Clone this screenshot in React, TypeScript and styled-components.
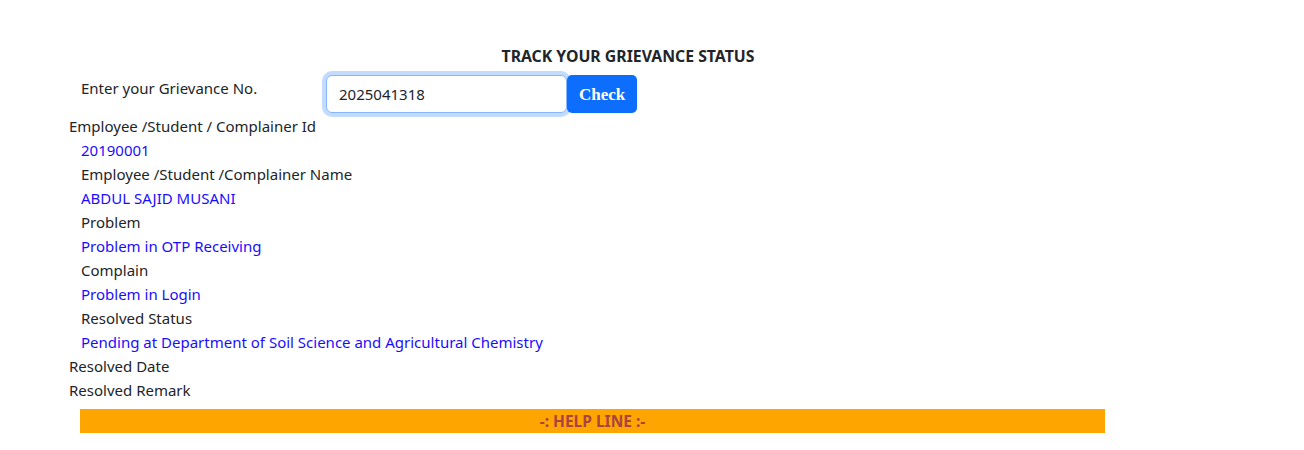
import React from 'react';
import styled, { createGlobalStyle } from 'styled-components';

const GlobalStyle = createGlobalStyle`
  body {
    margin: 0;
    background: #fff;
    color: #212529;
    font-family: "Noto Sans", "Open Sans", sans-serif;
    font-size: 15px;
    line-height: 24px;
  }
`;

const Page = styled.div`
  padding: 44px 0 0 69px;
  width: 1036px;
`;

const Title = styled.h5`
  margin: 0 0 7px;
  padding-left: 82px;
  text-align: center;
  font-size: 15.8px;
  font-weight: 700;
  line-height: 24px;
`;

const SearchRow = styled.div`
  display: flex;
  align-items: flex-start;
  padding: 0 0 1px 12px;
`;

const SearchLabel = styled.label`
  width: 245px;
  padding-top: 1px;
`;

const InputBox = styled.input`
  box-sizing: border-box;
  width: 241px;
  height: 38px;
  margin: 0;
  padding: 4px 12px;
  font: inherit;
  color: #212529;
  border: 1px solid #86b7fe;
  border-radius: 6px;
  outline: none;
  box-shadow: 0 0 0 4px rgba(13, 110, 253, 0.25);
`;

const CheckButton = styled.button`
  box-sizing: border-box;
  height: 38px;
  padding: 2px 12px 0;
  background: #0d6efd;
  color: #fff;
  border: none;
  border-radius: 5px;
  font-family: "Liberation Serif", serif;
  font-weight: 700;
  font-size: 17px;
  position: relative;
`;

const Field = styled.div<{ $indent?: boolean; $value?: boolean }>`
  padding-left: ${(p) => (p.$indent ? '12px' : '0')};
  color: ${(p) => (p.$value ? '#1a0dff' : '#212529')};
`;

const HelpLine = styled.div`
  margin: 7px 0 0 11px;
  background: #ffa500;
  color: #a94442;
  text-align: center;
  font-size: 15.5px;
  font-weight: 700;
  line-height: 24px;
`;

const rows: Array<[string, boolean, boolean]> = [
  ['20190001', true, true],
  ['Employee /Student /Complainer Name', true, false],
  ['ABDUL SAJID MUSANI', true, true],
  ['Problem', true, false],
  ['Problem in OTP Receiving', true, true],
  ['Complain', true, false],
  ['Problem in Login', true, true],
  ['Resolved Status', true, false],
  ['Pending at Department of Soil Science and Agricultural Chemistry', true, true],
  ['Resolved Date', false, false],
  ['Resolved Remark', false, false],
];

export default function App() {
  return (
    <>
      <GlobalStyle />
      <Page>
        <Title>TRACK YOUR GRIEVANCE STATUS</Title>
        <SearchRow>
          <SearchLabel>Enter your Grievance No.</SearchLabel>
          <InputBox defaultValue="2025041318" />
          <CheckButton>Check</CheckButton>
        </SearchRow>
        <Field>Employee /Student / Complainer Id</Field>
        {rows.map(([text, indent, value]) => (
          <Field key={text} $indent={indent} $value={value}>
            {text}
          </Field>
        ))}
        <HelpLine>-: HELP LINE :-</HelpLine>
      </Page>
    </>
  );
}
